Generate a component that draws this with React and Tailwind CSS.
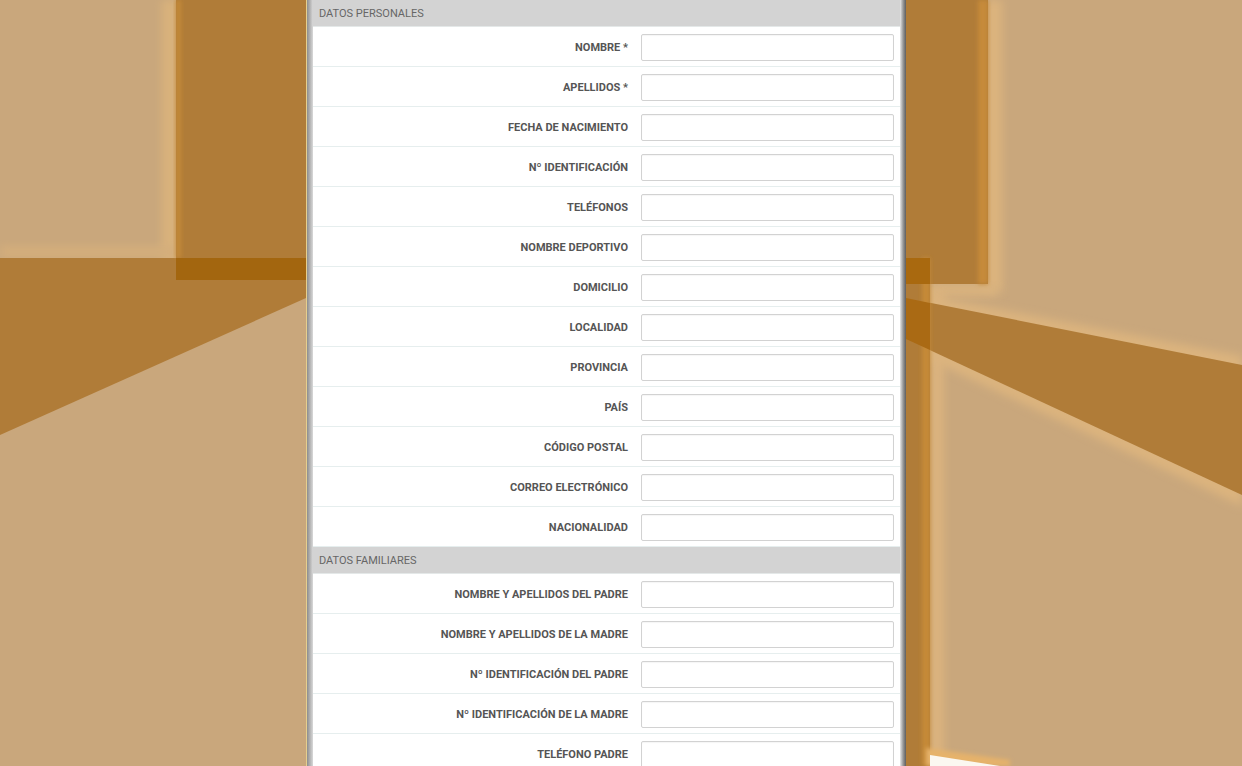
import React from "react";

const personales = [
  "NOMBRE *",
  "APELLIDOS *",
  "FECHA DE NACIMIENTO",
  "Nº IDENTIFICACIÓN",
  "TELÉFONOS",
  "NOMBRE DEPORTIVO",
  "DOMICILIO",
  "LOCALIDAD",
  "PROVINCIA",
  "PAÍS",
  "CÓDIGO POSTAL",
  "CORREO ELECTRÓNICO",
  "NACIONALIDAD",
];

const familiares = [
  "NOMBRE Y APELLIDOS DEL PADRE",
  "NOMBRE Y APELLIDOS DE LA MADRE",
  "Nº IDENTIFICACIÓN DEL PADRE",
  "Nº IDENTIFICACIÓN DE LA MADRE",
  "TELÉFONO PADRE",
];

function Background() {
  return (
    <svg
      className="col-start-1 row-start-1 w-[1242px] h-[766px]"
      width="1242"
      height="766"
      viewBox="0 0 1242 766"
    >
      <defs>
        <filter id="blur4" x="-50%" y="-50%" width="200%" height="200%">
          <feGaussianBlur stdDeviation="4" />
        </filter>
        <filter id="blur2" x="-50%" y="-50%" width="200%" height="200%">
          <feGaussianBlur stdDeviation="2" />
        </filter>
      </defs>
      <rect x="0" y="0" width="1242" height="766" fill="#c9a77c" />

      {/* left glows */}
      <rect x="162" y="0" width="16" height="262" fill="#d9b27c" filter="url(#blur4)" />
      <rect x="0" y="246" width="176" height="12" fill="#d4ae7c" filter="url(#blur4)" />

      {/* left horizontal band with diagonal bottom */}
      <polygon points="0,258 306,258 306,298 0,435" fill="#b07c38" />
      {/* left vertical band */}
      <rect x="176" y="0" width="130" height="258" fill="#b07c38" />
      <rect x="176" y="0" width="5" height="258" fill="#c48938" filter="url(#blur2)" />
      <rect x="176" y="258" width="130" height="22" fill="#a3660f" />

      {/* right glows */}
      <rect x="986" y="0" width="16" height="290" fill="#dcb47e" filter="url(#blur4)" />
      <rect x="928" y="284" width="70" height="12" fill="#dab37e" filter="url(#blur4)" />
      <rect x="930" y="290" width="14" height="476" fill="#dbb37e" filter="url(#blur4)" />
      <polygon points="930,296 1242,356 1242,372 930,310" fill="#dcb47e" filter="url(#blur4)" />
      <polygon points="930,344 1242,488 1242,506 930,360" fill="#dcb47e" filter="url(#blur4)" />

      {/* right diagonal band */}
      <polygon points="906,298 1242,365 1242,495 906,339" fill="#b07c38" />
      {/* right upper vertical band */}
      <rect x="906" y="0" width="82" height="284" fill="#b07c38" />
      <rect x="978" y="0" width="10" height="284" fill="#c68a3a" filter="url(#blur2)" />
      {/* right narrow vertical band */}
      <rect x="906" y="258" width="24" height="508" fill="#b07c38" />
      <rect x="922" y="258" width="8" height="508" fill="#c68a38" filter="url(#blur2)" />
      <rect x="906" y="258" width="24" height="26" fill="#a9690f" />
      <polygon points="906,298 930,303 930,350 906,339" fill="#aa6a14" />

      {/* bottom right light shape */}
      <polygon points="926,748 1010,760 1010,766 926,766" fill="#e6b26a" filter="url(#blur2)" />
      <polygon points="930,755 1000,766 930,766" fill="#fbf7f0" />
    </svg>
  );
}

function Header({ children }) {
  return (
    <div className="shrink-0 h-[27px] bg-[#d3d3d3] border-b border-[#e4e8e8] pl-[6px] pt-[2px] flex items-center text-[11px] text-[#666666]">
      {children}
    </div>
  );
}

function Row({ label }) {
  return (
    <div className="shrink-0 h-[40px] flex items-center border-b border-[#e6eeee]">
      <div className="w-[321px] pr-[6px] pt-[3px] text-right text-[11px] font-bold text-[#555555] whitespace-nowrap">
        {label}
      </div>
      <div className="ml-[7px] mt-[2px] w-[253px] h-[27px] border border-[#d2d2d2] rounded-[2px] bg-white shadow-[inset_0_1px_1px_rgba(0,0,0,0.04)]" />
    </div>
  );
}

export default function App() {
  return (
    <div
      className="grid w-[1242px] h-[766px] overflow-hidden"
      style={{ fontFamily: 'Roboto, "Liberation Sans", Arial, sans-serif' }}
    >
      <Background />
      <div className="col-start-1 row-start-1 ml-[306px] w-[600px] h-[766px] flex overflow-hidden">
        <div className="w-[1px] bg-[#e6cf8e]" />
        <div className="w-[6px] bg-gradient-to-r from-[#8d8d8d] to-[#d9d9d9]" />
        <div className="w-[587px] bg-white flex flex-col">
          <Header>DATOS PERSONALES</Header>
          {personales.map((l) => (
            <Row key={l} label={l} />
          ))}
          <Header>DATOS FAMILIARES</Header>
          {familiares.map((l) => (
            <Row key={l} label={l} />
          ))}
        </div>
        <div className="w-[6px] bg-gradient-to-r from-[#e8e8e8] via-[#9a9a9a] to-[#5e5e5e]" />
      </div>
    </div>
  );
}
